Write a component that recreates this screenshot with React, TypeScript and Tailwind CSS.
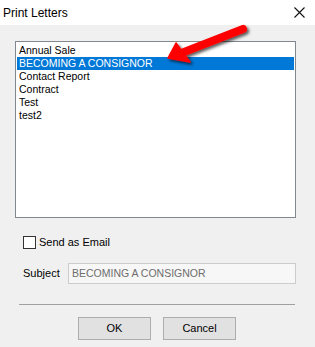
import React, { useState } from 'react';

const LETTERS = ['Annual Sale', 'BECOMING A CONSIGNOR', 'Contact Report', 'Contract', 'Test', 'test2'];

const App: React.FC = () => {
  const [selected, setSelected] = useState(1);
  const [sendEmail, setSendEmail] = useState(false);

  return (
    <div className="relative w-[315px] h-[347px] bg-[#f0f0f0] overflow-hidden" style={{ fontFamily: '"Liberation Sans", Arial, sans-serif' }}>
      {/* Title bar */}
      <div className="h-[25px] bg-white flex items-center justify-between pl-[3px] pr-[10px]">
        <span className="text-[12px] text-black leading-none">Print Letters</span>
        <svg width="11" height="11" viewBox="0 0 11 11" className="mr-[0px]">
          <path d="M0.5 0.5 L10.5 10.5 M10.5 0.5 L0.5 10.5" stroke="#111" strokeWidth="1.1" />
        </svg>
      </div>

      {/* Body */}
      <div className="flex flex-col pt-[16px]">
        {/* Letter list */}
        <div className="ml-[15px] w-[281px] h-[177px] bg-white border border-[#828790] pt-[2px] px-[1px]">
          {LETTERS.map((name, i) => (
            <div
              key={name}
              onClick={() => setSelected(i)}
              className={`h-[13px] pl-[2px] text-[10.5px] leading-[13px] whitespace-nowrap ${
                selected === i ? 'bg-[#0078d7] text-white' : 'text-black'
              }`}
            >
              {name}
            </div>
          ))}
        </div>

        {/* Send as email */}
        <label className="mt-[18px] ml-[23px] flex items-center h-[13px] gap-[3px] cursor-default">
          <span
            onClick={() => setSendEmail(!sendEmail)}
            className="w-[13px] h-[13px] bg-white border border-[#333] flex items-center justify-center"
          >
            {sendEmail && (
              <svg width="9" height="9" viewBox="0 0 9 9">
                <path d="M1 4.5 L3.5 7 L8 1.5" stroke="#333" strokeWidth="1.4" fill="none" />
              </svg>
            )}
          </span>
          <span className="text-[11px] text-black leading-none">Send as Email</span>
        </label>

        {/* Subject */}
        <div className="mt-[14px] ml-[23px] flex items-center">
          <span className="w-[45px] text-[11px] text-black leading-none">Subject</span>
          <div className="w-[228px] h-[21px] border border-[#cccccc] bg-[#f7f7f7] flex items-center pl-[3px] text-[10.5px] text-[#6d6d6d] whitespace-nowrap">
            BECOMING A CONSIGNOR
          </div>
        </div>

        {/* Separator */}
        <div className="mt-[20px] ml-[19px] w-[276px] h-px bg-[#a0a0a0]" />

        {/* Buttons */}
        <div className="mt-[12px] ml-[78px] flex gap-[12px]">
          <button className="w-[73px] h-[23px] bg-[#e1e1e1] border border-[#adadad] text-[11px] text-black">OK</button>
          <button className="w-[73px] h-[23px] bg-[#e1e1e1] border border-[#adadad] text-[11px] text-black">Cancel</button>
        </div>
      </div>

      {/* Red annotation arrow */}
      <svg className="absolute left-0 top-0 pointer-events-none" width="315" height="347" viewBox="0 0 315 347">
        <defs>
          <filter id="sh" x="-20%" y="-20%" width="140%" height="140%">
            <feDropShadow dx="2" dy="2" stdDeviation="1.4" floodColor="#000" floodOpacity="0.65" />
          </filter>
        </defs>
        <g filter="url(#sh)">
          <line x1="243" y1="29" x2="184" y2="52" stroke="#ff0000" strokeWidth="8" strokeLinecap="round" />
          <polygon points="168,58 176,43 190,62" fill="#ff0000" stroke="#ff0000" strokeWidth="1.5" strokeLinejoin="round" />
        </g>
      </svg>
    </div>
  );
};

export default App;
